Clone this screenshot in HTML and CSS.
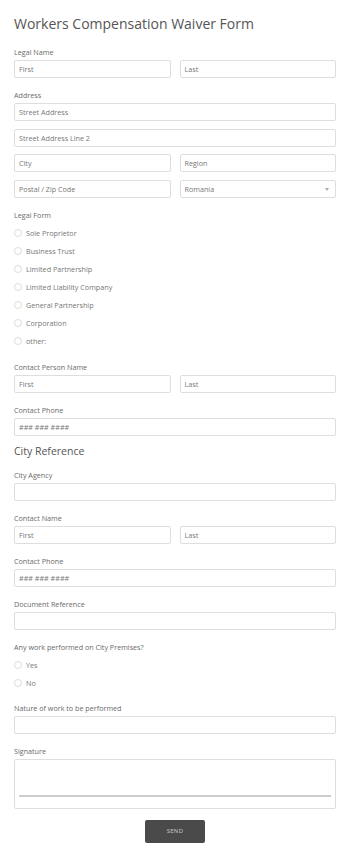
FILE: index.html
```html
<!DOCTYPE html>
<html>
<head>
<meta charset="utf-8">
<link rel="stylesheet" href="styles.css">
</head>
<body>
<form class="form">
  <h1 class="title">Workers Compensation Waiver Form</h1>

  <div class="field">
    <div class="label">Legal Name</div>
    <div class="row">
      <div class="input">First</div>
      <div class="input">Last</div>
    </div>
  </div>

  <div class="field">
    <div class="label">Address</div>
    <div class="stack">
      <div class="input">Street Address</div>
      <div class="input">Street Address Line 2</div>
      <div class="row">
        <div class="input">City</div>
        <div class="input">Region</div>
      </div>
      <div class="row">
        <div class="input">Postal / Zip Code</div>
        <div class="input select">Romania<span class="caret"></span></div>
      </div>
    </div>
  </div>

  <div class="field radios-field legal-form">
    <div class="label">Legal Form</div>
    <div class="radios">
      <div class="radio"><span class="dot"></span>Sole Proprietor</div>
      <div class="radio"><span class="dot"></span>Business Trust</div>
      <div class="radio"><span class="dot"></span>Limited Partnership</div>
      <div class="radio"><span class="dot"></span>Limited Liability Company</div>
      <div class="radio"><span class="dot"></span>General Partnership</div>
      <div class="radio"><span class="dot"></span>Corporation</div>
      <div class="radio"><span class="dot"></span>other:</div>
    </div>
  </div>

  <div class="field">
    <div class="label">Contact Person Name</div>
    <div class="row">
      <div class="input">First</div>
      <div class="input">Last</div>
    </div>
  </div>

  <div class="field">
    <div class="label">Contact Phone</div>
    <div class="input">### ### ####</div>
  </div>

  <h2 class="section">City Reference</h2>

  <div class="field">
    <div class="label">City Agency</div>
    <div class="input"></div>
  </div>

  <div class="field">
    <div class="label">Contact Name</div>
    <div class="row">
      <div class="input">First</div>
      <div class="input">Last</div>
    </div>
  </div>

  <div class="field">
    <div class="label">Contact Phone</div>
    <div class="input">### ### ####</div>
  </div>

  <div class="field">
    <div class="label">Document Reference</div>
    <div class="input"></div>
  </div>

  <div class="field radios-field premises">
    <div class="label">Any work performed on City Premises?</div>
    <div class="radios">
      <div class="radio"><span class="dot"></span>Yes</div>
      <div class="radio"><span class="dot"></span>No</div>
    </div>
  </div>

  <div class="field">
    <div class="label">Nature of work to be performed</div>
    <div class="input"></div>
  </div>

  <div class="field signature-field">
    <div class="label">Signature</div>
    <div class="signature"><div class="sigline"></div></div>
  </div>

  <div class="actions">
    <button type="button" class="send">SEND</button>
  </div>
</form>
</body>
</html>
```

FILE: styles.css
```css
html, body {
  margin: 0;
  padding: 0;
  background: #fff;
}
body {
  font-family: "Open Sans", "Noto Sans", sans-serif;
  color: #555;
}
.form {
  padding: 14px 14px 0 14px;
  display: flex;
  flex-direction: column;
}
.title {
  margin: 0 0 13px 0;
  font-size: 14px;
  font-weight: 400;
  line-height: 20px;
  color: #555;
}
.section {
  margin: -3px 0 12.5px 0;
  font-size: 10.5px;
  font-weight: 400;
  line-height: 13px;
  color: #555;
}
.field {
  margin-bottom: 12px;
}
.label {
  font-size: 7.2px;
  line-height: 10px;
  color: #6a6a6a;
  margin-bottom: 3px;
}
.row {
  display: grid;
  grid-template-columns: 1fr 1fr;
  column-gap: 9px;
}
.stack {
  display: flex;
  flex-direction: column;
  gap: 7.7px;
}
.input {
  box-sizing: border-box;
  height: 18px;
  border: 1px solid #dedede;
  border-radius: 2px;
  padding: 0 4px;
  font-size: 7.2px;
  line-height: 16px;
  color: #777;
  position: relative;
}
.caret {
  position: absolute;
  right: 6px;
  top: 7px;
  width: 0;
  height: 0;
  border-left: 2.5px solid transparent;
  border-right: 2.5px solid transparent;
  border-top: 3px solid #aaa;
}
.radios {
  display: flex;
  flex-direction: column;
  gap: 8px;
  padding-top: 5px;
}
.radio {
  display: flex;
  align-items: center;
  font-size: 7.2px;
  line-height: 10px;
  color: #777;
}
.dot {
  box-sizing: border-box;
  width: 8px;
  height: 8px;
  border: 1px solid #ddd;
  border-radius: 50%;
  margin-right: 4px;
}
.legal-form {
  margin-bottom: 15.5px;
}
.premises {
  margin-bottom: 14.5px;
}
.signature-field {
  margin-bottom: 11px;
}
.signature {
  box-sizing: border-box;
  height: 50px;
  border: 1px solid #dedede;
  border-radius: 2px;
  padding: 35px 4px 0 4px;
}
.sigline {
  height: 2px;
  background: #ccc;
}
.actions {
  display: flex;
  justify-content: center;
}
.send {
  width: 60px;
  height: 23px;
  border: none;
  border-radius: 2px;
  background: #4a4a4a;
  color: #ccc;
  font-family: "Open Sans", "Noto Sans", sans-serif;
  font-size: 6px;
  letter-spacing: 0.3px;
  padding: 0;
}
```
